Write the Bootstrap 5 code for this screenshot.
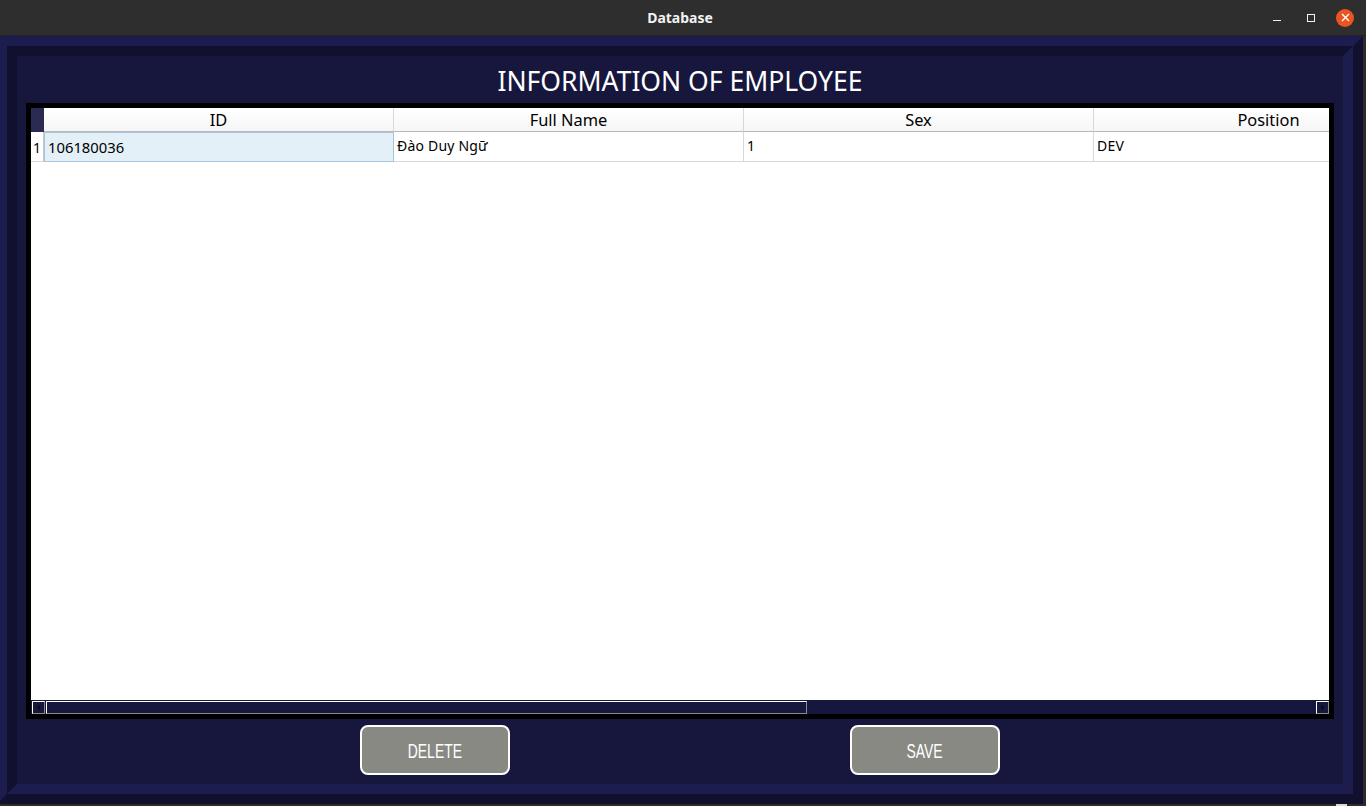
<!DOCTYPE html>
<html lang="en">
<head>
<meta charset="utf-8">
<title>Database</title>
<link href="https://cdn.jsdelivr.net/npm/bootstrap@5.3.0/dist/css/bootstrap.min.css" rel="stylesheet">
<style>
html,body{height:806px;overflow:hidden;background:#2b2b2b}
body{font-family:"Noto Sans","Open Sans",sans-serif;color:#000}
.app-shell{width:1366px;height:806px}
.titlebar{height:36px;background:#2e2e2e;color:#f2f2f2;font-size:14px;font-weight:700;border-bottom:1px solid #222}
.titlebar-name{left:0;right:6px;top:8px;line-height:20px}
.win-ctrl{right:4px;top:0;height:35px}
.win-btn{width:34px}
.win-close{width:18px;height:18px;background:#e95420}
.window-area{height:770px;padding-right:3px;padding-bottom:2px;background:#2b2b2b}
.outer-frame{margin-left:-3px;border:10px solid;border-color:#1c1c4e #11112f #11112f #1c1c4e}
.inner-frame{border:10px solid;border-color:#11112f #1c1c4e #1c1c4e #11112f;background:#17173e;padding-left:9px;padding-right:9px}
.page-title{height:47px;color:#fff;font-family:"Noto Sans",sans-serif;font-size:26.5px;line-height:50px;margin:0;font-weight:400}
.grid-box{height:616px;width:1308px;border:5px solid #000;background:#fff}
.grid-scroll{overflow:hidden}
.emp-table{table-layout:fixed;width:1413px;font-size:14px;border-collapse:separate;border-spacing:0;letter-spacing:.2px}
.emp-table th,.emp-table td{padding:0;font-weight:400;white-space:nowrap;overflow:hidden;background:#fff;color:#000;box-shadow:none}
.emp-table th{height:24px;font-size:16.4px;line-height:22px;text-align:center;letter-spacing:0;border-bottom:1px solid #b9b9b9;border-right:1px solid #d8d8d8;background:linear-gradient(#fff,#f6f6f6)}
.emp-table .corner{width:13px;background:#2a2a52;border:0;border-bottom:1px solid #2a2a52}
.emp-table .col-cell{width:350px}
.emp-table td{height:30px;line-height:26px;padding:0 0 2px 3px;border-bottom:1px solid #d8d8d8;border-right:1px solid #d8d8d8}
.emp-table td.row-num{padding:2px 0 0;text-align:center;border-right:1px solid #c8c8c8;font-size:14px;line-height:26px}
.emp-table td.cell-current{background:#e4f0f8;border:1px solid #a9c4d8;padding:0 0 0 3px;font-size:14.8px;line-height:27px;letter-spacing:0}
.hscroll{height:14px;background:#17173e;padding:0 0 0 1px}
.arrow-box{width:13px;height:13px;border:1px solid;border-color:#fff #8a8a8a #8a8a8a #fff}
.thumb-box{width:761px;height:13px;margin-left:1px;border:1px solid;border-color:#fff #8a8a8a #8a8a8a #fff}
.action-row{height:57px;width:1308px}
.action-btn{position:absolute;top:6px;width:150px;height:50px;background:#888983;border:2px solid #fff;border-radius:8px;color:#fff;font-family:"Liberation Sans",sans-serif;font-size:20.5px;padding:2px 0 0}
.action-label{display:inline-block;transform:scaleX(.68)}
.btn-del{left:334px}
.btn-save{left:824px}
.foot-mark{right:19px;bottom:0;width:11px;height:2px;background:#d8d8d8}
</style>
</head>
<body>
<div class="app-shell position-relative">
  <div class="titlebar position-relative">
    <div class="titlebar-name position-absolute text-center">Database</div>
    <div class="win-ctrl position-absolute d-flex align-items-center">
      <div class="win-btn d-flex justify-content-center"><svg width="10" height="10" viewBox="0 0 10 10"><rect x="1" y="7" width="8" height="1" fill="#f2f2f2"/></svg></div>
      <div class="win-btn d-flex justify-content-center"><svg width="10" height="10" viewBox="0 0 10 10"><rect x="1.5" y="1.5" width="7" height="7" fill="none" stroke="#f2f2f2"/></svg></div>
      <div class="win-btn d-flex justify-content-center"><div class="win-close rounded-circle d-flex align-items-center justify-content-center"><svg width="9" height="9" viewBox="0 0 9 9"><path d="M1 1 8 8M8 1 1 8" stroke="#fff" stroke-width="1.4"/></svg></div></div>
    </div>
  </div>
  <div class="window-area d-flex flex-column">
    <div class="outer-frame flex-grow-1 d-flex flex-column">
      <div class="inner-frame flex-grow-1 d-flex flex-column">
        <h1 class="page-title text-center">INFORMATION OF EMPLOYEE</h1>
        <div class="grid-box d-flex flex-column">
          <div class="grid-scroll flex-grow-1">
            <table class="emp-table mb-0">
              <thead>
                <tr><th class="corner"></th><th class="col-cell">ID</th><th class="col-cell">Full Name</th><th class="col-cell">Sex</th><th class="col-cell">Position</th></tr>
              </thead>
              <tbody>
                <tr><td class="row-num">1</td><td class="cell-current">106180036</td><td>Đào Duy Ngữ</td><td>1</td><td>DEV</td></tr>
              </tbody>
            </table>
          </div>
          <div class="hscroll d-flex align-items-center">
            <div class="arrow-box flex-shrink-0 d-flex align-items-center justify-content-center"><svg width="5" height="7" viewBox="0 0 5 7"><path d="M4 0.5V6.5L0.5 3.5Z" fill="#0b0b20"/></svg></div>
            <div class="thumb-box flex-shrink-0"></div>
            <div class="arrow-box flex-shrink-0 ms-auto d-flex align-items-center justify-content-center"><svg width="5" height="7" viewBox="0 0 5 7"><path d="M1 0.5V6.5L4.5 3.5Z" fill="#0b0b20"/></svg></div>
          </div>
        </div>
        <div class="action-row position-relative">
          <button type="button" class="btn action-btn btn-del"><span class="action-label">DELETE</span></button>
          <button type="button" class="btn action-btn btn-save"><span class="action-label">SAVE</span></button>
        </div>
      </div>
    </div>
  </div>
  <div class="foot-mark position-absolute"></div>
</div>
<script src="https://cdn.jsdelivr.net/npm/bootstrap@5.3.0/dist/js/bootstrap.bundle.min.js"></script>
</body>
</html>
